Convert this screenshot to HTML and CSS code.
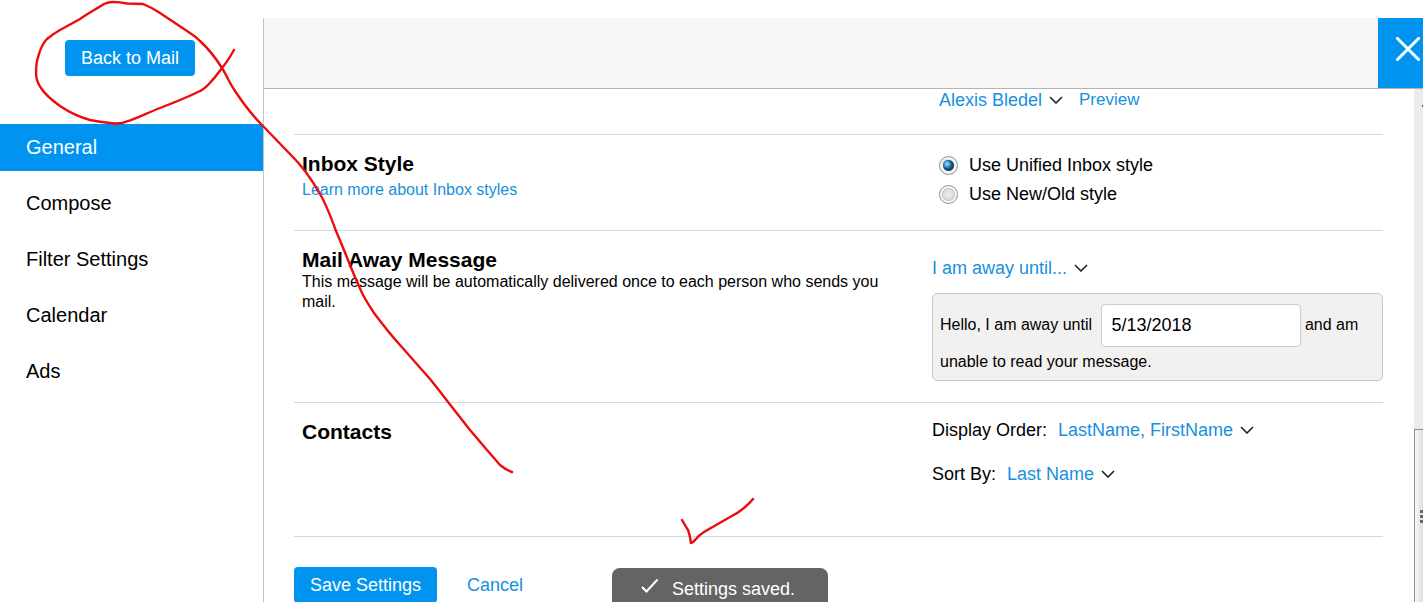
FILE: index.html
```html
<!DOCTYPE html>
<html lang="en">
  <head>
    <meta charset="UTF-8" />
    <meta name="viewport" content="width=device-width, initial-scale=1" />
    <title>Mail Settings - General</title>
    <link rel="stylesheet" href="styles.css">
  </head>
  <body>
    <aside class="sidebar">
      <div class="sidebar-top">
        <button type="button" class="btn">Back to Mail</button>
      </div>
      <nav>
        <a href="#general" class="active">General</a>
        <a href="#compose">Compose</a>
        <a href="#filters">Filter Settings</a>
        <a href="#calendar">Calendar</a>
        <a href="#ads">Ads</a>
      </nav>
    </aside>

    <div class="panel">
      <header>
        <button type="button" class="close" aria-label="Close">
          <svg width="24" height="24" viewBox="0 0 24 24"><path d="M1.5 1.5 22.5 22.5M22.5 1.5 1.5 22.5" /></svg>
        </button>
      </header>

      <div class="panel-body">
        <main>
          <section class="row row-sender">
            <div class="row-info"></div>
            <div class="row-control sender">
              <span class="dropdown">
                <select aria-label="Sending name"><option>Alexis Bledel</option></select>
                <svg class="chevron" viewBox="0 0 14 8"><path d="M1 1 7 7 13 1" /></svg>
              </span>
              <a href="#preview">Preview</a>
            </div>
          </section>

          <section class="row row-inbox">
            <div class="row-info">
              <h2>Inbox Style</h2>
              <a href="#inbox-styles" class="learn-more">Learn more about Inbox styles</a>
            </div>
            <div class="row-control inbox-options">
              <label><input type="radio" name="inbox" checked /> Use Unified Inbox style</label>
              <label><input type="radio" name="inbox" /> Use New/Old style</label>
            </div>
          </section>

          <section class="row row-away">
            <div class="row-info">
              <h2>Mail Away Message</h2>
              <p>This message will be automatically delivered once to each person who sends you mail.</p>
            </div>
            <div class="row-control">
              <span class="dropdown away-select">
                <select aria-label="Away message"><option>I am away until...</option></select>
                <svg class="chevron" viewBox="0 0 14 8"><path d="M1 1 7 7 13 1" /></svg>
              </span>
              <div class="away-box">
                <label for="awayDate">Hello, I am away until</label>
                <input type="text" id="awayDate" value="5/13/2018" />
                <span>and am</span> <span>unable to read your message.</span>
              </div>
            </div>
          </section>

          <section class="row row-contacts">
            <div class="row-info">
              <h2>Contacts</h2>
            </div>
            <div class="row-control contact-options">
              <div class="field">
                <label for="displayOrder">Display Order:</label>
                <span class="dropdown">
                  <select id="displayOrder"><option>LastName, FirstName</option></select>
                  <svg class="chevron" viewBox="0 0 14 8"><path d="M1 1 7 7 13 1" /></svg>
                </span>
              </div>
              <div class="field">
                <label for="sortBy">Sort By:</label>
                <span class="dropdown">
                  <select id="sortBy"><option>Last Name</option></select>
                  <svg class="chevron" viewBox="0 0 14 8"><path d="M1 1 7 7 13 1" /></svg>
                </span>
              </div>
            </div>
          </section>

          <div class="actions">
            <button type="button" class="btn">Save Settings</button>
            <a href="#cancel">Cancel</a>
          </div>
        </main>

        <div class="scrollbar" aria-hidden="true">
          <div class="scroll-track">
            <span class="scroll-arrow"></span>
          </div>
          <div class="scroll-thumb">
            <div class="grip"><i></i><i></i><i></i></div>
          </div>
        </div>
      </div>
    </div>

    <div class="toast" role="status">
      <svg width="18" height="16" viewBox="0 0 18 16"><path d="M1 9 5.5 13.5 16.5 1.5" /></svg>
      Settings saved.
    </div>

    <!-- hand-drawn markup -->
    <svg class="scribble" width="1423" height="602" viewBox="0 0 1423 602" aria-hidden="true">
      <path d="M234 50C230 57 227 62 222 68C217 75 212 81 207 86C204 88 203 90 200 91C188 97 173 103 160 108C147 113 134 120 122 123Q115 124 110 123Q100 122 90 120C79 117 69 112 60 106C53 101 46 96 41 88Q36 81 36 73Q36 62 39 54Q42 44 47 39Q53 34 60 30L80 19C87 14 98 8 104 4Q108 2 113 2Q120 2 127 3.500L143 4Q153 8 160 13L190 33Q195 36 200 41Q212 52 222 68C227 76 229 82 235 91C243 103 252 115 262 125L290 154Q299 163 305 171Q314 183 320 194C326 204 332 220 336 231C340 240 344 250 348 260Q355 278 363 295Q368 304 374 313C383 325 390 334 400 345L430 379Q439 390 448 402L470 430L487 450Q494 458 500 465Q506 470 512 472" />
      <path d="M682 520Q686 527 688 530Q690 535 691 543Q693 543 695 540Q699 535 704 532L730 517Q738 513 744 508Q750 503 753 499" />
    </svg>
  </body>
</html>
```
FILE: styles.css
```css
* {
  margin: 0;
  padding: 0;
  box-sizing: border-box;
}
body {
  position: relative;
  display: flex;
  height: 100vh;
  padding-top: 18px;
  overflow: hidden;
  background: #fff;
  color: #000;
  font-family: "Liberation Sans", Arial, sans-serif;
  font-size: 18px;
}
a {
  color: #188fe0;
  text-decoration: none;
}
button,
input,
select {
  font: inherit;
}
.btn {
  height: 36px;
  padding: 1px 16px 0;
  border: none;
  border-radius: 4px;
  background: #0094f0;
  color: #fff;
  cursor: pointer;
}

/* Sidebar */
.sidebar {
  flex: 0 0 264px;
  border-right: 1px solid #c4c4c4;
}
.sidebar-top {
  height: 106px;
  padding: 22px 0 0 65px;
}
nav {
  display: flex;
  flex-direction: column;
  gap: 9px;
}
nav a {
  height: 47px;
  padding-left: 26px;
  color: #000;
  font-size: 20px;
  line-height: 46px;
}
nav a.active {
  background: #0094f0;
  color: #fff;
}

/* Panel */
.panel {
  flex: 1;
  min-width: 0;
  display: flex;
  flex-direction: column;
}
header {
  flex: 0 0 71px;
  display: flex;
  justify-content: flex-end;
  border-bottom: 1px solid #b4b4b4;
  background: #f6f6f6;
}
.close {
  width: 45px;
  padding: 0 0 8px 14px;
  border: none;
  background: #0094f0;
  cursor: pointer;
}
.close svg {
  display: inline-block;
  vertical-align: middle;
  fill: none;
  stroke: #fff;
  stroke-width: 3;
  stroke-linecap: round;
}
.panel-body {
  flex: 1;
  min-height: 0;
  display: flex;
}
main {
  flex: 1;
  min-width: 0;
  padding: 0 31px 0 30px;
}
.row {
  display: grid;
  grid-template-columns: minmax(0, 1fr) 451px;
  padding: 16px 0;
  border-bottom: 1px solid #d8d8d8;
}
.row-info {
  padding: 0 24px 0 8px;
}
.row h2 {
  font-size: 21px;
  line-height: 25px;
}
.row p {
  font-size: 16px;
  line-height: 20px;
}
.learn-more {
  display: block;
  margin-top: 4px;
  font-size: 16px;
  line-height: 20px;
}

/* Dropdowns */
.dropdown {
  display: inline-flex;
  align-items: center;
  gap: 6px;
  height: 22px;
}
.dropdown select {
  appearance: none;
  border: none;
  background: none;
  color: #188fe0;
  cursor: pointer;
}
.chevron {
  width: 14px;
  height: 8px;
  fill: none;
  stroke: #222;
  stroke-width: 1.6;
}

.row-sender {
  height: 46px;
  padding: 0;
}
.sender {
  display: flex;
  gap: 16px;
  padding-left: 7px;
  line-height: 22px;
}
.sender a {
  font-size: 17px;
}

/* Inbox style */
.row-inbox {
  min-height: 96px;
}
.inbox-options {
  padding-left: 7px;
}
.inbox-options label {
  display: flex;
  align-items: center;
  gap: 11px;
  line-height: 29px;
}
.inbox-options input {
  appearance: none;
  width: 19px;
  height: 19px;
  border: 1px solid #8e8f8f;
  border-radius: 50%;
  background: radial-gradient(circle, #eee 0, #ddd 5px, #c4c4c4 6px, #f8f8f8 7px);
}
.inbox-options input:checked {
  background:
    radial-gradient(circle at 7px 7px, #a8e4fa 0, rgba(60, 160, 210, 0.8) 3px, transparent 5px),
    radial-gradient(circle, #1d6c9c 0, #123f60 5px, #f4f4f4 6px);
}

/* Away message */
.row-away {
  min-height: 172px;
}
.away-select {
  height: 28px;
  margin-top: 7px;
}
.away-box {
  margin-top: 11px;
  padding: 10px 7px 0;
  height: 88px;
  border: 1px solid #c8c8c8;
  border-radius: 5px;
  background: #f3f1f0;
  font-size: 16px;
  line-height: 30px;
}
.away-box input {
  width: 200px;
  height: 43px;
  margin-left: 4px;
  padding: 0 10px;
  border: 1px solid #ccc;
  border-radius: 4px;
  background: #fff;
  font-size: 18px;
  vertical-align: middle;
}

/* Contacts */
.row-contacts {
  min-height: 134px;
}
.contact-options {
  display: flex;
  flex-direction: column;
  gap: 22px;
}
.field {
  display: flex;
  align-items: center;
  gap: 11px;
  height: 22px;
}

.actions {
  display: flex;
  align-items: center;
  gap: 30px;
  padding-top: 30px;
}

/* Scrollbar */
.scrollbar {
  flex: 0 0 9px;
  display: flex;
  flex-direction: column;
  overflow: hidden;
}
.scroll-track {
  flex: 0 0 340px;
  display: flex;
  justify-content: flex-end;
  padding-top: 16px;
  background: #ececec;
}
.scroll-arrow {
  width: 1px;
  height: 2px;
  background: #555;
}
.scroll-thumb {
  flex: 1;
  display: flex;
  justify-content: flex-end;
  align-items: center;
  border-top: 1px solid #8c8c8c;
  border-left: 1px solid #8c8c8c;
  background: linear-gradient(to right, #fafafa, #dcdcdc);
}
.grip {
  display: grid;
  gap: 2px;
}
.grip i {
  width: 3px;
  height: 3px;
  background: #666;
}

/* Toast */
.toast {
  position: fixed;
  left: 43%;
  bottom: -8px;
  display: flex;
  align-items: center;
  gap: 13px;
  width: 216px;
  height: 42px;
  padding-left: 29px;
  border-radius: 8px;
  background: #646464;
  color: #fff;
}
.toast svg {
  margin-bottom: 6px;
  fill: none;
  stroke: #fff;
  stroke-width: 2;
}

.scribble {
  position: absolute;
  top: 0;
  left: 0;
  fill: none;
  stroke: #ed0c0c;
  stroke-width: 2.4;
  stroke-linecap: round;
  stroke-linejoin: round;
  pointer-events: none;
}
```
